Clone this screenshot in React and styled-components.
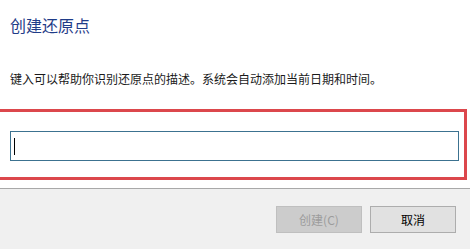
import React from "react";
import styled, { createGlobalStyle } from "styled-components";

const GlobalStyle = createGlobalStyle`
  html, body {
    margin: 0;
    padding: 0;
    background: #ffffff;
  }
  body {
    font-family: "Noto Sans CJK SC", "Noto Sans", sans-serif;
  }
`;

const Dialog = styled.div`
  width: 470px;
  height: 249px;
  display: flex;
  flex-direction: column;
  background: #ffffff;
  overflow: hidden;
`;

const Title = styled.h1`
  margin: 0;
  padding: 13px 0 0 10px;
  font-size: 16px;
  line-height: 24px;
  font-weight: normal;
  color: #1f3c88;
`;

const Description = styled.p`
  margin: 33px 0 0 0;
  padding-left: 10px;
  font-size: 12px;
  line-height: 18px;
  color: #1a1a1a;
`;

// red annotation frame around the text box, left edge runs off the shot
const Highlight = styled.div`
  margin-top: 21px;
  width: 467px;
  height: 71px;
  box-sizing: border-box;
  border: 3px solid #dc474c;
  border-left: none;
  padding: 19px 5px 0 10px;
`;

const TextBox = styled.div`
  height: 30px;
  box-sizing: border-box;
  border: 1px solid #3c7290;
  background: #ffffff;
  display: flex;
  align-items: center;
  padding-left: 3px;
`;

const Caret = styled.span`
  display: block;
  width: 1px;
  height: 17px;
  background: #000000;
`;

const Footer = styled.div`
  margin-top: 8px;
  flex: 1;
  border-top: 1px solid #a8a8a8;
  background: #f0f0f0;
  display: flex;
  justify-content: flex-end;
  align-items: flex-start;
  gap: 8px;
  padding: 17px 14px 0 0;
`;

const Button = styled.button`
  width: 86px;
  height: 27px;
  box-sizing: border-box;
  margin: 0;
  padding: 0;
  font-family: "Noto Sans CJK SC", "Noto Sans", sans-serif;
  font-size: 12px;
  border: 1px solid ${(p) => (p.disabled ? "#bfbfbf" : "#adadad")};
  background: ${(p) => (p.disabled ? "#cccccc" : "#e1e1e1")};
  color: ${(p) => (p.disabled ? "#9c9c9c" : "#000000")};
`;

export default function App() {
  return (
    <>
      <GlobalStyle />
      <Dialog>
        <Title>创建还原点</Title>
        <Description>
          键入可以帮助你识别还原点的描述。系统会自动添加当前日期和时间。
        </Description>
        <Highlight>
          <TextBox role="textbox">
            <Caret />
          </TextBox>
        </Highlight>
        <Footer>
          <Button disabled>创建(C)</Button>
          <Button>取消</Button>
        </Footer>
      </Dialog>
    </>
  );
}
